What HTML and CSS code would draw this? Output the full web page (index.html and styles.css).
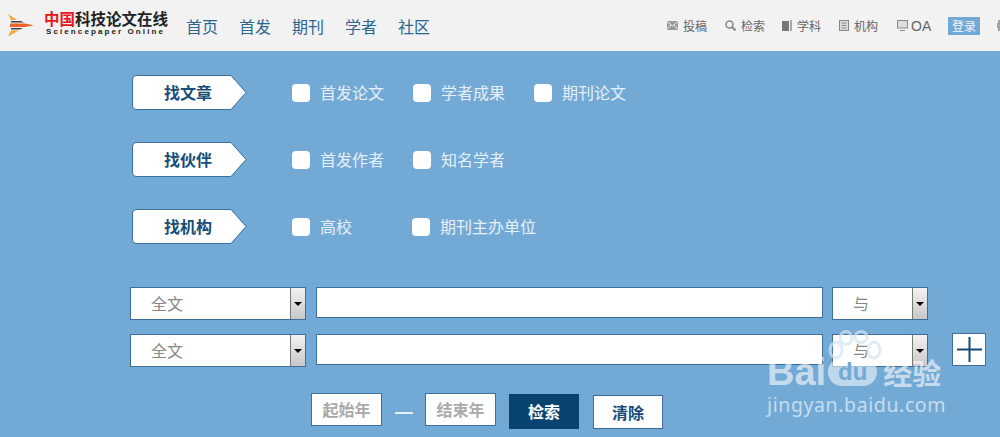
FILE: index.html
```html
<!DOCTYPE html>
<html lang="zh">
<head>
<meta charset="utf-8">
<title>中国科技论文在线</title>
<link rel="stylesheet" href="styles.css">
</head>
<body>
<header class="header">
  <a class="logo">
    <svg class="logo-icon" width="27" height="23" viewBox="0 0 27 23">
      <path d="M0 0l9 6H3z" fill="#f7a53c"/>
      <path d="M3 7h10l3 1.500H3z" fill="#444"/>
      <path d="M2 9.500h15l9 1.700-9 1.700H2z" fill="#f0632a"/>
      <path d="M3 14h12l-3 1.500H3z" fill="#444"/>
      <path d="M3 16.500h8L0 22.500z" fill="#f7a53c"/>
    </svg>
    <span class="logo-text">
      <span class="logo-cn"><span class="logo-red">中国</span>科技论文在线</span>
      <span class="logo-en">Sciencepaper Online</span>
    </span>
  </a>
  <nav class="nav">
    <a>首页</a><a>首发</a><a>期刊</a><a>学者</a><a>社区</a>
  </nav>
  <div class="tools">
    <a class="tool tool-wide">
      <svg width="11" height="9" viewBox="0 0 11 9"><rect width="11" height="9" fill="#999"/><path d="M0 .5l5.500 4.500L11 .5M0 8.500l4-4.500M11 8.500l-4-4.500" fill="none" stroke="#eee"/></svg>
      投稿
    </a>
    <a class="tool">
      <svg width="11" height="11" viewBox="0 0 11 11"><circle cx="4.500" cy="4.500" r="3.500" fill="none" stroke="#888" stroke-width="1.500"/><path d="M7 7l3.500 3.500" stroke="#888" stroke-width="2"/></svg>
      检索
    </a>
    <a class="tool">
      <svg width="10" height="11" viewBox="0 0 10 11"><path d="M0 1h7v10H0z" fill="#777"/><path d="M8 0h2v11H8z" fill="#aaa"/></svg>
      学科
    </a>
    <a class="tool tool-wide">
      <svg width="10" height="11" viewBox="0 0 10 11"><rect x=".5" y=".5" width="9" height="10" fill="#ddd" stroke="#888"/><path d="M2.500 3h5M2.500 5.500h5M2.500 8h5" stroke="#888"/></svg>
      机构
    </a>
    <a class="tool tool-oa">
      <svg width="11" height="11" viewBox="0 0 11 11"><rect x=".5" y=".5" width="10" height="7.500" fill="#ddd" stroke="#888"/><path d="M3 10.500h5" stroke="#888"/></svg>
      OA
    </a>
    <a class="login">登录</a>
    <a class="tool tool-more">
      <svg width="10" height="11" viewBox="0 0 10 11"><path d="M2 0v11M0 3v5M6 1v9" stroke="#888" stroke-width="1.500"/></svg>
    </a>
  </div>
</header>

<main class="main">
  <section class="groups">
    <div class="group">
      <div class="tag"><svg class="tag-shape" width="115" height="35" viewBox="0 0 115 35"><path d="M5 .5H99L114 17.500 99 34.500H5Q.5 34.500.5 30V5Q.5.500 5 .5z" fill="#fff" stroke="#3c6f9c"/></svg><span class="tag-text">找文章</span></div>
      <label class="check check-a"><i class="box"></i><span class="check-text">首发论文</span></label>
      <label class="check check-a"><i class="box"></i><span class="check-text">学者成果</span></label>
      <label class="check"><i class="box"></i><span class="check-text">期刊论文</span></label>
    </div>
    <div class="group">
      <div class="tag"><svg class="tag-shape" width="115" height="35" viewBox="0 0 115 35"><path d="M5 .5H99L114 17.500 99 34.500H5Q.5 34.500.5 30V5Q.5.500 5 .5z" fill="#fff" stroke="#3c6f9c"/></svg><span class="tag-text">找伙伴</span></div>
      <label class="check check-a"><i class="box"></i><span class="check-text">首发作者</span></label>
      <label class="check"><i class="box"></i><span class="check-text">知名学者</span></label>
    </div>
    <div class="group">
      <div class="tag"><svg class="tag-shape" width="115" height="35" viewBox="0 0 115 35"><path d="M5 .5H99L114 17.500 99 34.500H5Q.5 34.500.5 30V5Q.5.500 5 .5z" fill="#fff" stroke="#3c6f9c"/></svg><span class="tag-text">找机构</span></div>
      <label class="check check-b"><i class="box"></i><span class="check-text">高校</span></label>
      <label class="check"><i class="box"></i><span class="check-text">期刊主办单位</span></label>
    </div>
  </section>

  <section class="search">
    <div class="search-row">
      <div class="select select-field"><span class="select-value">全文</span><span class="select-btn"></span></div>
      <div class="input"></div>
      <div class="select select-op"><span class="select-value">与</span><span class="select-btn"></span></div>
    </div>
    <div class="search-row">
      <div class="select select-field"><span class="select-value">全文</span><span class="select-btn"></span></div>
      <div class="input"></div>
      <div class="select select-op"><span class="select-value">与</span><span class="select-btn"></span></div>
      <div class="plus"><svg width="25" height="25" viewBox="0 0 25 25"><path d="M0 12.500h25M12.500 0v25" stroke="#0f4a78" stroke-width="2"/></svg></div>
    </div>
  </section>

  <section class="actions">
    <div class="year">起始年</div>
    <span class="dash"></span>
    <div class="year">结束年</div>
    <button class="btn btn-primary">检索</button>
    <button class="btn">清除</button>
  </section>
</main>

<div class="watermark">
  <svg class="paw" width="54" height="32" viewBox="0 0 54 32">
    <g fill="rgba(255,255,255,.1)" stroke="#d2e4f2" stroke-opacity=".7" stroke-width="3">
      <ellipse cx="8" cy="20" rx="6" ry="8"/>
      <ellipse cx="18" cy="8" rx="6" ry="6.500"/>
      <ellipse cx="33" cy="7" rx="6" ry="5.500"/>
      <ellipse cx="46" cy="20" rx="6" ry="8"/>
    </g>
  </svg>
  <div class="wm-line"><span class="wm-bai">Bai</span><span class="wm-du">du</span><span class="wm-cn">经验</span></div>
  <div class="wm-url">jingyan.baidu.com</div>
</div>
</body>
</html>
```

FILE: styles.css
```css
* { box-sizing: border-box; }
html, body { margin: 0; height: 100%; }
body {
  position: relative;
  width: 1000px;
  height: 437px;
  overflow: hidden;
  background: #73a9d5;
  font-family: "Noto Sans CJK SC", "Noto Sans", sans-serif;
}
.header {
  display: flex;
  align-items: center;
  height: 51px;
  background: #f2f2f2;
  padding-left: 8px;
}
.logo { display: flex; flex: none; align-items: center; width: 178px; }
.logo-icon { flex: none; margin-right: 9px; margin-top: -1px; }
.logo-text { display: flex; flex-direction: column; gap: 2px; width: 130px; margin-top: -4px; }
.logo-cn {
  font-size: 15.500px;
  font-weight: 700;
  line-height: 15px;
  color: #222;
  white-space: nowrap;
}
.logo-red { color: #e8141c; }
.logo-en {
  font-family: "Liberation Sans", sans-serif;
  font-size: 8px;
  font-weight: 700;
  letter-spacing: 2.100px;
  line-height: 8px;
  margin-left: 2px;
  color: #222;
  white-space: nowrap;
}
.nav { display: flex; flex: none; gap: 21px; }
.nav a { font-size: 16px; line-height: 24px; color: #2c6690; white-space: nowrap; }
.tools {
  display: flex;
  flex: none;
  align-items: center;
  margin-left: 237px;
  white-space: nowrap;
}
.tool {
  display: flex;
  align-items: center;
  gap: 5px;
  width: 57px;
  font-size: 12px;
  color: #666;
}
.tool-wide { width: 58px; }
.tool-oa {
  gap: 3px;
  width: 51px;
  font-family: "Liberation Sans", sans-serif;
  font-size: 14px;
}
.tool-more { width: 10px; }
.login {
  width: 32px;
  height: 18px;
  margin-right: 17px;
  background: #73a9d5;
  color: #eef5fb;
  font-size: 12px;
  line-height: 18px;
  text-align: center;
}
.main { padding: 24px 0 0 130px; }
.groups { display: flex; flex-direction: column; gap: 32px; padding-left: 2px; }
.group { display: flex; align-items: center; height: 35px; }
.tag {
  position: relative;
  display: flex;
  align-items: center;
  width: 115px;
  height: 35px;
  margin-right: 45px;
}
.tag-shape { position: absolute; left: 0; top: 0; }
.tag-text {
  position: relative;
  margin-left: 32px;
  margin-top: -1px;
  font-size: 16px;
  font-weight: 700;
  color: #174d78;
}
.check {
  display: flex;
  align-items: center;
  gap: 10px;
  font-size: 16px;
  line-height: 24px;
  color: #e6f0f8;
  white-space: nowrap;
}
.check-text { margin-top: -2px; }
.check-a { margin-right: 29px; }
.check-b { margin-right: 60px; }
.box {
  display: block;
  width: 18px;
  height: 18px;
  background: #fff;
  border-radius: 4px;
}
.search {
  display: flex;
  flex-direction: column;
  gap: 14px;
  margin-top: 43px;
}
.search-row { display: flex; align-items: flex-start; gap: 10px; height: 33px; }
.select {
  display: flex;
  height: 33px;
  background: #fff;
  border: 1px solid #3c6f9c;
}
.select-field { width: 176px; }
.select-op { width: 96px; margin-left: -1px; }
.select-value {
  flex: 1;
  padding-left: 20px;
  font-size: 16px;
  line-height: 31px;
  color: #888;
}
.select-btn {
  position: relative;
  width: 15px;
  background: linear-gradient(#f2f2f2, #c8c8c8);
  border-left: 1px solid #777;
}
.select-btn::after {
  content: "";
  position: absolute;
  left: 3px;
  top: 14px;
  border: 4px solid transparent;
  border-top-color: #000;
  border-bottom: 0;
}
.input {
  width: 507px;
  height: 31px;
  background: #fff;
  border: 1px solid #3c6f9c;
}
.plus {
  display: flex;
  align-items: center;
  justify-content: center;
  width: 34px;
  height: 33px;
  margin: -1px 0 0 14px;
  background: #fff;
  border: 1px solid #3c6f9c;
}
.actions {
  display: flex;
  align-items: flex-start;
  margin-top: 26px;
  padding-left: 181px;
}
.year {
  width: 71px;
  height: 33px;
  background: #fff;
  border: 1px solid #3c6f9c;
  font-size: 16px;
  font-weight: 700;
  line-height: 31px;
  text-align: center;
  color: #aaa;
}
.dash {
  width: 18px;
  height: 1.500px;
  margin: 19px 12px 0 13px;
  background: #e6f0f8;
}
.btn {
  width: 70px;
  height: 34px;
  margin: 2px 0 0 14px;
  padding: 0;
  background: #fff;
  border: 1px solid #3c6f9c;
  border-radius: 0;
  font-family: inherit;
  font-size: 16px;
  font-weight: 700;
  line-height: 31px;
  color: #174d78;
}
.btn-primary {
  height: 35px;
  margin: 1px 0 0 13px;
  background: #09436f;
  border-color: #09436f;
  color: #fff;
}
.watermark {
  position: absolute;
  left: 767px;
  top: 330px;
  width: 190px;
  color: rgba(255, 255, 255, .6);
}
.paw { position: absolute; left: 61px; top: 0; }
.wm-line {
  display: flex;
  align-items: center;
  margin-top: 26px;
  height: 32px;
  font-family: "Liberation Sans", sans-serif;
  font-weight: 700;
}
.wm-bai { font-size: 38px; line-height: 32px; }
.wm-du {
  width: 49px;
  height: 28px;
  margin-left: 2px;
  background: rgba(255, 255, 255, .55);
  border-radius: 14px;
  color: #73a9d5;
  font-size: 24px;
  line-height: 27px;
  text-align: center;
}
.wm-cn {
  font-family: "Noto Sans CJK SC", sans-serif;
  font-size: 29px;
  line-height: 32px;
  margin-left: 6px;
}
.wm-url {
  font-family: "Noto Sans", sans-serif;
  font-size: 19.500px;
  letter-spacing: .6px;
  line-height: 24px;
  margin-top: 5px;
}
```
